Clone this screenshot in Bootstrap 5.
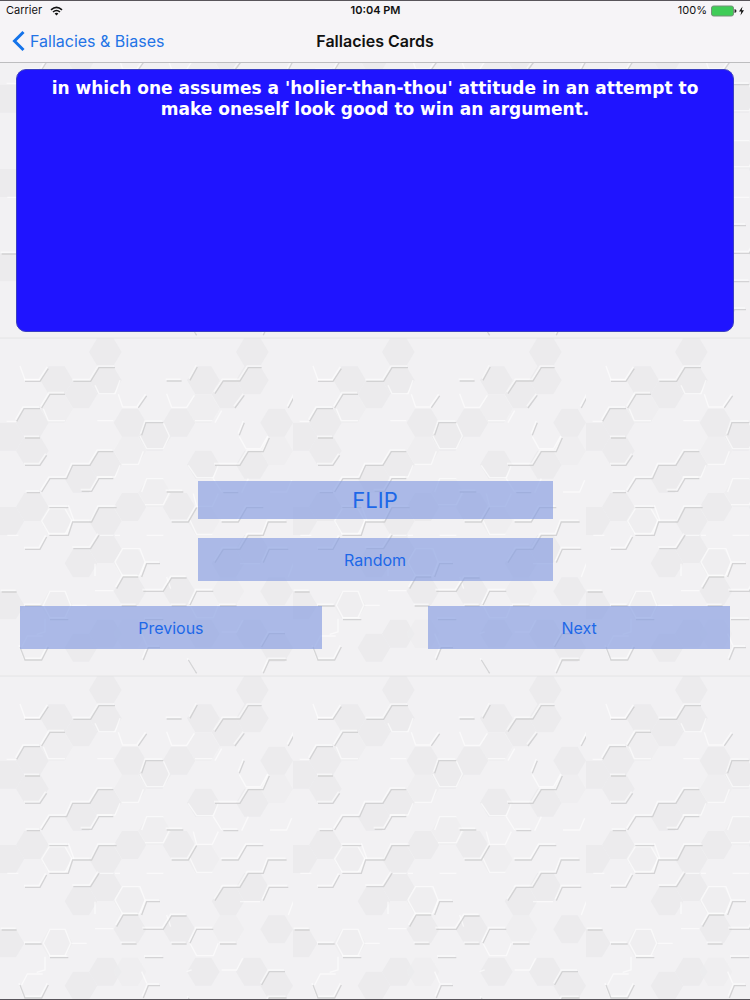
<!DOCTYPE html>
<html lang="en">
<head>
<meta charset="utf-8">
<meta name="viewport" content="width=device-width, initial-scale=1">
<title>Fallacies Cards</title>
<link href="https://cdn.jsdelivr.net/npm/bootstrap@5.3.0/dist/css/bootstrap.min.css" rel="stylesheet">
<style>
  body { font-family: Inter, "Liberation Sans", sans-serif; background: #f1f1f2; color: #111; }
  .screen { border-top: 1px solid #58545a; border-bottom: 1px solid #58545a; isolation: isolate; }
  .honeycomb { z-index: -1; }
  .top-area { background: #f6f4f7; border-bottom: 1px solid #bdbdbf; }
  .status-row { height: 19px; font-size: 11px; line-height: 19px; padding: 0 5px 0 6px; }
  .status-time { font-weight: 600; }
  .title-row { height: 42px; padding: 0 12px; }
  .title-row h1 { font-size: 16px; line-height: 24px; font-weight: 600; }
  .back-link { font-size: 16px; line-height: 24px; color: #2273e6; }
  .flash-card { margin: 6px 16px 0; min-height: 263px; padding: 8px 16px; border: 1px solid #3a3fc0; border-radius: 10px; background: #1f14ff; color: #fff; font: bold 17px/21px "DejaVu Sans", Verdana, sans-serif; }
  .controls { margin-top: 149px; padding: 0 20px; }
  .tile-btn { --bs-btn-color: #1d68e8; --bs-btn-bg: rgba(133,157,224,.66); --bs-btn-hover-color: #1d68e8; --bs-btn-hover-bg: rgba(120,146,222,.8); --bs-btn-border-width: 0; --bs-btn-border-radius: 0; --bs-btn-padding-y: 0; height: 43px; font-size: 16px; }
  .flip-btn { height: 38px; margin-bottom: 19px; font-size: 22px; line-height: 38px; }
  .random-btn { margin-bottom: 25px; }
  .step-btn { width: 42.5%; }
</style>
</head>
<body>
<div class="screen position-relative min-vh-100 d-flex flex-column">
  <svg class="honeycomb position-absolute top-0 start-0 w-100 h-100" aria-hidden="true">
    <defs>
      <path id="hex" d="M-49 0L-24 -42H24L49 0L24 42H-24Z"/>
      <g id="steps" fill="none">
        <path d="M75 178H120L145 140M220 178H272L297 137H345M50 298L72 260H120M570 175L592 135M645 215L670 177H720L745 137H785M705 258L733 220M415 258L440 222M125 258L150 217H195M865 258L885 220M545 177H500M425 340L438 302H490M718 340L733 302M75 348H120M75 430H120L140 400M125 510L150 470H200L218 430H270L295 389H340M245 508H275L297 470H340M645 430H720L745 389H790L808 348M670 512H715M148 557H205M148 640H205L218 600H275L297 557H350M515 600H565L590 557M665 600H715L740 557H790M75 682H120L140 645M220 680H272L297 640M645 722L670 682H720L745 640H790L805 600H860M790 722L808 682H865M425 765L440 725H480M430 808H490L515 768H560M350 800L370 765H415M5 810H50M75 852H125M365 852H410M515 852H560M570 850L590 808H640M660 852H710M150 893H205M435 893H490M60 975L75 1014H125L145 975M785 975L808 935H855M430 1014L445 977H480M565 1014L590 1054M790 1054L808 1014H860M500 510H550M80 512H120"/>
      </g>
      <pattern id="comb" width="293" height="338" patternUnits="userSpaceOnUse" y="-2">
        <rect width="293" height="338" fill="#f2f1f3"/>
        <g transform="translate(0 -15) scale(.3333)">
          <g fill="#e5e5e7" opacity=".5">
            <use href="#hex" x="316" y="90"/><use href="#hex" x="316" y="175"/><use href="#hex" x="170" y="175"/><use href="#hex" x="243" y="217"/><use href="#hex" x="97" y="302"/><use href="#hex" x="97" y="386"/><use href="#hex" x="24" y="344"/><use href="#hex" x="390" y="302"/><use href="#hex" x="464" y="344"/><use href="#hex" x="537" y="302"/><use href="#hex" x="610" y="175"/><use href="#hex" x="684" y="217"/><use href="#hex" x="757" y="90"/><use href="#hex" x="757" y="175"/><use href="#hex" x="830" y="302"/><use href="#hex" x="316" y="428"/><use href="#hex" x="243" y="470"/><use href="#hex" x="610" y="428"/><use href="#hex" x="757" y="428"/><use href="#hex" x="97" y="555"/><use href="#hex" x="390" y="555"/><use href="#hex" x="537" y="555"/><use href="#hex" x="316" y="597"/><use href="#hex" x="24" y="597"/><use href="#hex" x="757" y="681"/><use href="#hex" x="684" y="724"/><use href="#hex" x="316" y="681"/><use href="#hex" x="243" y="724"/><use href="#hex" x="390" y="808"/><use href="#hex" x="537" y="808"/><use href="#hex" x="830" y="808"/><use href="#hex" x="24" y="850"/><use href="#hex" x="757" y="935"/><use href="#hex" x="610" y="935"/><use href="#hex" x="316" y="935"/><use href="#hex" x="243" y="977"/><use href="#hex" x="830" y="977"/>
          </g>
          <g fill="#ededee" opacity=".6">
            <use href="#hex" x="170" y="260"/><use href="#hex" x="390" y="386"/><use href="#hex" x="464" y="512"/><use href="#hex" x="830" y="386"/><use href="#hex" x="610" y="597"/><use href="#hex" x="170" y="597"/><use href="#hex" x="390" y="724"/><use href="#hex" x="170" y="850"/><use href="#hex" x="390" y="935"/><use href="#hex" x="684" y="808"/><use href="#hex" x="610" y="260"/>
          </g>
          <g fill="none" stroke="#fff" stroke-width="4" opacity=".6" stroke-linejoin="round">
            <path d="M60 132L75 173H120M285 190L297 215H345L360 175M355 217L368 255H415M500 215L515 256H560L583 220M130 260L145 296H195M292 296H340M585 296H637M645 302L665 266M420 342L440 380H490L508 342L490 302M718 344L738 380H782L803 342M365 427H415L430 388M290 465H345L360 430M425 510L440 470H490M435 548H490L508 512M640 470L665 510M565 430L590 467H640L655 430M580 515L590 553H637L655 515M125 597L148 560H195L216 597L195 637H148ZM205 550L222 597M360 640H345M440 640H490M345 720L368 680H420L435 720L418 762H368L345 720M500 765L512 800M285 806H340M130 850L150 808H195L212 850L195 887H150ZM215 850H260M570 850L590 887H640L655 850M285 762V725M720 725H780M865 765L880 725M665 930H710L728 895M575 930L560 935M65 975L82 942H128M135 890V930L110 937M22 640H55M20 298H50M300 640H340M725 512L745 470M570 595L590 637H637M810 510H860L875 475M440 970L425 935"/>
          </g>
          <use href="#steps" x="-3" y="-5" stroke="#fff" stroke-width="5" opacity=".55"/>
          <use href="#steps" stroke="#c9c9cb" stroke-width="4" opacity=".75"/>
          <path d="M0 48H880M882 50V92" fill="none" stroke="#e4e4e5" stroke-width="3"/>
        </g>
      </pattern>
    </defs>
    <rect width="100%" height="100%" fill="url(#comb)"/>
  </svg>

  <header class="top-area">
    <div class="status-row row g-0">
      <div class="col d-flex align-items-center">Carrier
        <svg class="ms-2" width="13" height="10" viewBox="0 0 13 10" aria-hidden="true"><path d="M1 3.8Q6.5-1 12 3.8M3 6Q6.5 3 10 6" fill="none" stroke="#111" stroke-width="1.6"/><path d="M4.6 7.5Q6.5 6 8.4 7.5L6.5 9.5Z" fill="#111"/></svg>
      </div>
      <div class="col-auto status-time">10:04 PM</div>
      <div class="col d-flex align-items-center justify-content-end">100%
        <svg class="ms-1" width="34" height="12" viewBox="0 0 34 12" aria-hidden="true"><rect x=".5" y="1" width="22" height="10" rx="2" fill="#3fcc57" stroke="#77917b"/><path d="M23.5 4Q25.5 4.5 25.5 6T23.5 8Z" fill="#222"/><path d="M31.5 1.5L28 6.5H30.3L29.5 10.5L33 5.3H30.7Z" fill="#111"/></svg>
      </div>
    </div>
    <nav class="title-row row g-0 align-items-center">
      <div class="col d-flex"><a class="back-link d-flex align-items-center text-decoration-none" href="#">
        <svg class="me-1" width="14" height="22" viewBox="0 0 14 22" aria-hidden="true"><path d="M11.5 2L2.5 11L11.5 20" fill="none" stroke="#1473ea" stroke-width="3"/></svg>Fallacies &amp; Biases</a></div>
      <div class="col-auto"><h1 class="m-0">Fallacies Cards</h1></div>
      <div class="col"></div>
    </nav>
  </header>

  <main>
    <section class="flash-card text-center">in which one assumes a 'holier-than-thou' attitude in an attempt to make oneself look good to win an argument.</section>
    <div class="controls d-flex flex-column align-items-center">
      <button type="button" class="btn tile-btn flip-btn w-50">FLIP</button>
      <button type="button" class="btn tile-btn random-btn w-50">Random</button>
      <div class="d-flex justify-content-between w-100">
        <button type="button" class="btn tile-btn step-btn">Previous</button>
        <button type="button" class="btn tile-btn step-btn">Next</button>
      </div>
    </div>
  </main>
</div>
<script src="https://cdn.jsdelivr.net/npm/bootstrap@5.3.0/dist/js/bootstrap.bundle.min.js"></script>
</body>
</html>
